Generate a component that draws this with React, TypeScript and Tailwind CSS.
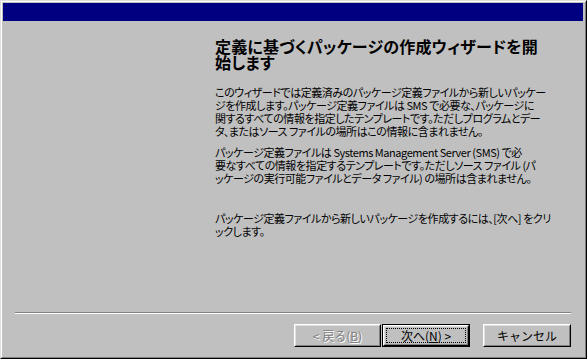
import React from 'react'

const jp = "font-['Noto_Sans_CJK_JP','Noto_Sans',sans-serif]"

function Button({
  children,
  isDefault,
  disabled,
  width,
}: {
  children: React.ReactNode
  isDefault?: boolean
  disabled?: boolean
  width: string
}) {
  const face = (
    <div className="h-full border border-t-white border-l-white border-r-black border-b-black">
      <div className="relative h-full border border-t-[#dfdfdf] border-l-[#dfdfdf] border-r-[#808080] border-b-[#808080] bg-[#c0c0c0] flex items-center justify-center">
        <span
          className={`text-[12px] leading-none whitespace-nowrap ${
            disabled ? 'text-[#808080] [text-shadow:1px_1px_0_#ffffff]' : 'text-black'
          }`}
        >
          {children}
        </span>
        {isDefault && <div className="absolute inset-[1px] border border-dotted border-black" />}
      </div>
    </div>
  )
  return (
    <div className={`${width} h-[23px] ${isDefault ? 'border border-black' : ''}`}>{face}</div>
  )
}

export default function App() {
  return (
    <div className={`w-[587px] h-[359px] bg-[#c0c0c0] ${jp} text-black`}>
      {/* window frame */}
      <div className="w-full h-full border border-t-[#dfdfdf] border-l-[#dfdfdf] border-r-black border-b-black">
        <div className="w-full h-full border border-t-white border-l-white border-r-[#808080] border-b-[#808080] flex flex-col">
          {/* caption */}
          <div className="h-[18px] mt-px ml-px mr-[2px] bg-[#000080]" />

          {/* content */}
          <div className="flex-1 pl-[213px] pt-[17px] [font-feature-settings:'palt']">
            <h1 className="text-[16px] leading-[16px] font-bold whitespace-nowrap tracking-[0.2px]">
              <div>定義に基づくパッケージの作成ウィザードを開</div>
              <div>始します</div>
            </h1>

            <div className="mt-[16px] text-[11px] leading-[13px] whitespace-nowrap tracking-[-0.45px]">
              <div>このウィザードでは定義済みのパッケージ定義ファイルから新しいパッケー</div>
              <div>ジを作成します。パッケージ定義ファイルは SMS で必要な、パッケージに</div>
              <div>関するすべての情報を指定したテンプレートです。ただしプログラムとデー</div>
              <div>タ、またはソース ファイルの場所はこの情報に含まれません。</div>
            </div>

            <div className="mt-[8px] text-[11px] leading-[13px] whitespace-nowrap tracking-[-0.45px]">
              <div>パッケージ定義ファイルは Systems Management Server (SMS) で必</div>
              <div>要なすべての情報を指定するテンプレートです。ただしソース ファイル (パ</div>
              <div>ッケージの実行可能ファイルとデータ ファイル) の場所は含まれません。</div>
            </div>

            <div className="mt-[27px] text-[11px] leading-[13px] whitespace-nowrap tracking-[-0.45px]">
              <div>パッケージ定義ファイルから新しいパッケージを作成するには、[次へ] をクリ</div>
              <div>ックします。</div>
            </div>
          </div>

          {/* separator */}
          <div className="ml-[13px] mr-[14px] h-[2px] border-t border-t-[#808080] border-b border-b-white" />

          {/* buttons */}
          <div className="flex justify-end items-start pt-[10px] pb-[10px] pr-[14px]">
            <Button width="w-[87px]" disabled>
              &lt; 戻る(<span className="underline">B</span>)
            </Button>
            <div className="w-px" />
            <Button width="w-[88px]" isDefault>
              次へ(<span className="underline">N</span>) &gt;
            </Button>
            <div className="w-[13px]" />
            <Button width="w-[88px]">キャンセル</Button>
          </div>
        </div>
      </div>
    </div>
  )
}
